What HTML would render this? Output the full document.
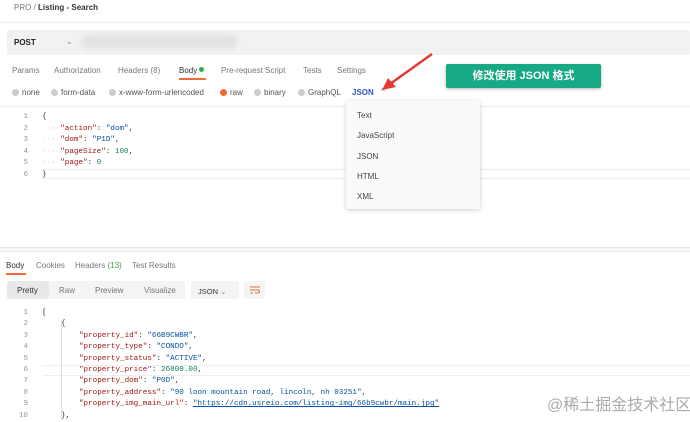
<!DOCTYPE html>
<html><head><meta charset="utf-8"><style>
*{margin:0;padding:0;box-sizing:border-box}
body{width:690px;height:422px;overflow:hidden;background:#fff;font-family:"Liberation Sans","Noto Sans CJK SC",sans-serif;color:#333;position:relative;font-size:8px}
.a{position:absolute;white-space:nowrap}
.g{color:#777}
.m{font-family:"Liberation Mono",monospace;font-size:7.6px}
.ln{color:#999;text-align:right;width:12px}
.k{color:#a31515}.s{color:#0451a5}.n{color:#098658}
.dot{display:inline-block;width:7px;height:7px;border-radius:50%;background:#ccc;vertical-align:-1px;margin-right:3px}
</style></head><body>
<div class="a" style="left:14px;top:3px;font-size:8px"><span class="g">PRO</span> <span class="g">/</span> <b style="font-weight:600;color:#333">Listing - Search</b></div>
<div class="a" style="left:0;top:22px;width:690px;height:1px;background:#eee"></div>
<div class="a" style="left:7px;top:30px;width:683px;height:25px;background:#f2f2f2;border-radius:2px"></div>
<div class="a" style="left:14px;top:38px;font-weight:bold;font-size:8px;color:#222">POST</div>
<div class="a" style="left:66px;top:37px;font-size:8px;color:#888">⌄</div>
<div class="a" style="left:82px;top:35px;width:155px;height:14px;background:#e2e2e2;border-radius:6px;filter:blur(3px)"></div>
<div class="a g" style="left:12px;top:66px">Params</div>
<div class="a g" style="left:54px;top:66px">Authorization</div>
<div class="a g" style="left:118px;top:66px">Headers (8)</div>
<div class="a" style="left:179px;top:66px;color:#333">Body <span style="display:inline-block;width:5px;height:5px;border-radius:50%;background:#29b34a;vertical-align:1px"></span></div>
<div class="a" style="left:179px;top:78px;width:27px;height:1.5px;background:#f26b3a"></div>
<div class="a g" style="left:221px;top:66px">Pre-request Script</div>
<div class="a g" style="left:303px;top:66px">Tests</div>
<div class="a g" style="left:337px;top:66px">Settings</div>
<div class="a" style="left:12px;top:88px;color:#555"><span class="dot"></span>none</div>
<div class="a" style="left:51px;top:88px;color:#555"><span class="dot"></span>form-data</div>
<div class="a" style="left:109px;top:88px;color:#555"><span class="dot"></span>x-www-form-urlencoded</div>
<div class="a" style="left:220px;top:88px;color:#555"><span class="dot" style="background:#f26b3a"></span>raw</div>
<div class="a" style="left:254px;top:88px;color:#555"><span class="dot"></span>binary</div>
<div class="a" style="left:298px;top:88px;color:#555"><span class="dot"></span>GraphQL</div>
<div class="a" style="left:352px;top:88px;color:#2f55c7;font-weight:600">JSON</div>
<div class="a" style="left:381px;top:87px;color:#777;font-size:8px">^</div>
<div class="a" style="left:0;top:106px;width:690px;height:1px;background:#eee"></div>
<div class="a" style="left:446px;top:64px;width:155px;height:24px;background:#17a884;border-radius:2px;box-shadow:0 1px 3px rgba(0,0,0,.3);color:#fff;font-weight:bold;font-size:11px;text-align:center;line-height:24px">修改使用 JSON 格式</div>
<svg class="a" style="left:370px;top:50px" width="70" height="45"><line x1="62" y1="4" x2="20" y2="34" stroke="#e53935" stroke-width="2.5"/><polygon points="12,40 18,28 26,37" fill="#e53935"/></svg>
<div class="m a" style="left:0;top:112px;line-height:11.5px">
<div><span class="ln" style="display:inline-block;margin-left:16px">1</span><span style="margin-left:14px">{</span></div>
<div><span class="ln" style="display:inline-block;margin-left:16px">2</span><span style="margin-left:14px;color:#ccc">····</span><span class="k">"action"</span>: <span class="s">"dom"</span>,</div>
<div><span class="ln" style="display:inline-block;margin-left:16px">3</span><span style="margin-left:14px;color:#ccc">····</span><span class="k">"dom"</span>: <span class="s">"P1D"</span>,</div>
<div><span class="ln" style="display:inline-block;margin-left:16px">4</span><span style="margin-left:14px;color:#ccc">····</span><span class="k">"pageSize"</span>: <span class="n">100</span>,</div>
<div><span class="ln" style="display:inline-block;margin-left:16px">5</span><span style="margin-left:14px;color:#ccc">····</span><span class="k">"page"</span>: <span class="n">0</span></div>
<div><span class="ln" style="display:inline-block;margin-left:16px">6</span><span style="margin-left:14px">}</span></div>
</div>
<div class="a" style="left:42px;top:169px;width:648px;height:10px;border-top:1px solid #eee;border-bottom:1px solid #eee"></div>
<div class="a" style="left:0;top:247px;width:690px;height:5px;background:#f5f5f5;border-top:1px solid #e9e9e9;border-bottom:1px solid #e9e9e9"></div>
<div class="a" style="left:346px;top:101px;width:134px;height:108px;background:#fafafa;box-shadow:0 1px 5px rgba(0,0,0,.2);border-radius:2px"></div>
<div class="a" style="left:357px;top:111px;color:#444">Text</div>
<div class="a" style="left:357px;top:131px;color:#444">JavaScript</div>
<div class="a" style="left:357px;top:152px;color:#444">JSON</div>
<div class="a" style="left:357px;top:172px;color:#444">HTML</div>
<div class="a" style="left:357px;top:192px;color:#444">XML</div>
<div class="a" style="left:6px;top:261px;color:#333">Body</div>
<div class="a" style="left:6px;top:273px;width:20px;height:1.5px;background:#f26b3a"></div>
<div class="a g" style="left:36px;top:261px">Cookies</div>
<div class="a g" style="left:75px;top:261px">Headers <span style="color:#4a9a4a">(13)</span></div>
<div class="a g" style="left:132px;top:261px">Test Results</div>
<div class="a" style="left:7px;top:281px;width:178px;height:18px;background:#f4f4f4;border-radius:2px"></div>
<div class="a" style="left:7px;top:281px;width:42px;height:18px;background:#e8e8e8;border-radius:2px"></div>
<div class="a" style="left:17px;top:286px;color:#333">Pretty</div>
<div class="a g" style="left:59px;top:286px">Raw</div>
<div class="a g" style="left:95px;top:286px">Preview</div>
<div class="a g" style="left:144px;top:286px">Visualize</div>
<div class="a" style="left:191px;top:281px;width:48px;height:18px;background:#f4f4f4;border-radius:2px"></div>
<div class="a" style="left:198px;top:287px;color:#333;font-size:7.5px">JSON <span style="color:#888">⌄</span></div>
<div class="a" style="left:244px;top:281px;width:21px;height:18px;background:#f4f4f4;border-radius:2px"></div>
<svg class="a" style="left:249px;top:285px" width="12" height="10"><path d="M1 2h10M1 5h8a1.5 1.5 0 0 1 0 3H6M1 8h3" stroke="#e0703a" fill="none" stroke-width="1"/></svg>
<div class="m a" style="left:0;top:308px;line-height:11.4px">
<div><span class="ln" style="display:inline-block;margin-left:16px">1</span><span style="margin-left:14px">[</span></div>
<div><span class="ln" style="display:inline-block;margin-left:16px">2</span><span style="margin-left:33px">{</span></div>
<div><span class="ln" style="display:inline-block;margin-left:16px">3</span><span style="margin-left:51px" class="k">"property_id"</span>: <span class="s">"66B9CWBR"</span>,</div>
<div><span class="ln" style="display:inline-block;margin-left:16px">4</span><span style="margin-left:51px" class="k">"property_type"</span>: <span class="s">"CONDO"</span>,</div>
<div><span class="ln" style="display:inline-block;margin-left:16px">5</span><span style="margin-left:51px" class="k">"property_status"</span>: <span class="s">"ACTIVE"</span>,</div>
<div><span class="ln" style="display:inline-block;margin-left:16px">6</span><span style="margin-left:51px" class="k">"property_price"</span>: <span class="n">26800.00</span>,</div>
<div><span class="ln" style="display:inline-block;margin-left:16px">7</span><span style="margin-left:51px" class="k">"property_dom"</span>: <span class="s">"P0D"</span>,</div>
<div><span class="ln" style="display:inline-block;margin-left:16px">8</span><span style="margin-left:51px" class="k">"property_address"</span>: <span class="s">"90 loon mountain road, lincoln, nh 03251"</span>,</div>
<div><span class="ln" style="display:inline-block;margin-left:16px">9</span><span style="margin-left:51px" class="k">"property_img_main_url"</span>: <span class="s" style="text-decoration:underline">"https://cdn.usreio.com/listing-img/66b9cwbr/main.jpg"</span></div>
<div><span class="ln" style="display:inline-block;margin-left:16px">10</span><span style="margin-left:33px">},</span></div>
</div>
<div class="a" style="left:42px;top:365px;width:648px;height:11px;border-top:1px solid #eee;border-bottom:1px solid #eee"></div>
<div class="a" style="left:61px;top:320px;width:1px;height:100px;background:#ddd"></div>
<div class="a" style="left:547px;top:391px;font-size:16px;color:#aaa">@稀土掘金技术社区</div>
</body></html>
